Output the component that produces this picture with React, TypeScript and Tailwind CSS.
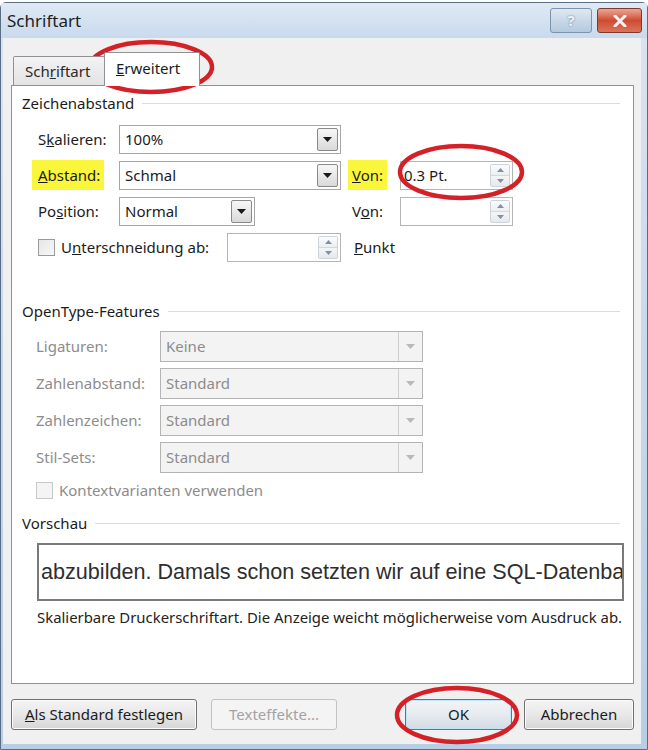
import React from "react";

const Arrow = ({ color = "#1a1a1a" }: { color?: string }) => (
  <svg width="9" height="5" viewBox="0 0 9 5">
    <path d="M0 0h9L4.5 5z" fill={color} />
  </svg>
);

function DropBtn({ disabled }: { disabled?: boolean }) {
  if (disabled) {
    return (
      <div className="w-[24px] self-stretch border-l border-[#cfcfcf] flex items-center justify-center">
        <Arrow color="#b9b9b9" />
      </div>
    );
  }
  return (
    <div className="w-[21px] my-[2px] mr-[2px] border border-[#8a8a8a] rounded-[2px] bg-gradient-to-b from-[#f7f7f7] to-[#d9d9d9] flex items-center justify-center">
      <Arrow />
    </div>
  );
}

function Spin() {
  return (
    <div className="w-[20px] my-[2px] mr-[2px] flex flex-col border border-[#cdd3da] rounded-[2px]">
      <div className="flex-1 flex items-center justify-center bg-gradient-to-b from-[#fbfbfb] to-[#eceff2] border-b border-[#d3d8de]">
        <svg width="7" height="4" viewBox="0 0 7 4">
          <path d="M0 4h7L3.5 0z" fill="#8190a8" />
        </svg>
      </div>
      <div className="flex-1 flex items-center justify-center bg-gradient-to-b from-[#f4f5f7] to-[#e6e9ec]">
        <svg width="7" height="4" viewBox="0 0 7 4">
          <path d="M0 0h7L3.5 4z" fill="#8190a8" />
        </svg>
      </div>
    </div>
  );
}

function Select({ value, w, disabled }: { value: string; w: string; disabled?: boolean }) {
  return (
    <div
      className={
        "flex self-stretch border " +
        w +
        (disabled ? " border-[#b4b4b4] bg-[#f3f3f3] text-[#8c8c8c]" : " border-[#a6a6a6] bg-white")
      }
    >
      <div className="flex-1 flex items-center pl-[5px]">{value}</div>
      <DropBtn disabled={disabled} />
    </div>
  );
}

function SpinInput({ value, w }: { value?: string; w: string }) {
  return (
    <div className={"flex self-stretch border border-[#b5b5b5] bg-white " + w}>
      <div className="flex-1 flex items-center pl-[3px]">{value}</div>
      <Spin />
    </div>
  );
}

function GroupHeader({ title }: { title: string }) {
  return (
    <div className="flex items-center h-[18px] pl-[10px] pr-[13px]">
      <span>{title}</span>
      <div className="flex-1 h-px bg-[#dcdcdc] ml-[8px]" />
    </div>
  );
}

function CheckBox({ disabled }: { disabled?: boolean }) {
  return (
    <div
      className={
        "w-[17px] h-[17px] border " +
        (disabled ? "border-[#c8c8c8] bg-[#f4f4f4]" : "border-[#9a9a9a] bg-gradient-to-br from-[#e6e6e6] to-[#f8f8f8]")
      }
    />
  );
}

function Btn({ children, w, disabled, def }: { children: React.ReactNode; w: string; disabled?: boolean; def?: boolean }) {
  return (
    <div
      className={
        "h-[31px] rounded-[3px] border flex items-center justify-center " +
        w +
        (disabled
          ? " border-[#c2c2c2] bg-[#f4f4f4] text-[#a3a3a3]"
          : def
          ? " border-[#3c7fb1] bg-gradient-to-b from-[#f2f5f7] via-[#e6ebef] to-[#d3dce3] shadow-[inset_0_0_0_1px_#bfe3f7]"
          : " border-[#707070] bg-gradient-to-b from-[#f4f4f4] via-[#e8e8e8] to-[#d6d6d6] shadow-[inset_0_0_0_1px_#fbfbfb]")
      }
    >
      {children}
    </div>
  );
}

export default function App() {
  return (
    <div className="w-[648px] h-[750px] bg-white pt-[2px] font-['Noto_Sans',sans-serif] text-[15px] leading-none text-[#1b1b1b] relative overflow-hidden">
      <div className="h-[748px] flex flex-col border border-[#5a6d82] rounded-t-[6px] bg-gradient-to-b from-[#d9e5f2] via-[#c6d8ec] to-[#b6cfe6]">
        {/* Title bar */}
        <div className="h-[35px] flex items-start pl-[6px] pr-[5px] bg-gradient-to-b from-[#dfe9f4] to-[#c8daee]">
          <span className="text-[17px] mt-[9px] text-[#1e1e1e]">Schriftart</span>
          <div className="ml-auto flex gap-[5px] mt-[5px]">
            <div className="w-[42px] h-[25px] rounded-[3px] border border-[#7d93ac] bg-gradient-to-b from-[#dfe8f2] via-[#c9d8e8] to-[#b5c9de] flex items-center justify-center">
              <span className="text-[15px] font-bold text-[#eef3f8] [text-shadow:0_0_2px_#56708e]">?</span>
            </div>
            <div className="w-[45px] h-[25px] rounded-[3px] border border-[#7c3a2e] bg-gradient-to-b from-[#e9a696] via-[#cf4a30] to-[#d8745c] flex items-center justify-center">
              <svg width="14" height="12" viewBox="0 0 14 12">
                <path d="M2 1l10 10M12 1L2 11" stroke="#f7f2f0" strokeWidth="3" strokeLinecap="round" />
              </svg>
            </div>
          </div>
        </div>
        {/* Client */}
        <div className="flex-1 ml-[2px] mr-[6px] mb-[5px] bg-[#f0f0f0] pl-[8px] pr-[7px] pt-[14px] flex flex-col">
          {/* Tabs */}
          <div className="h-[33px] flex items-end relative z-10">
            <div className="ml-[2px] w-[92px] h-[29px] border border-b-0 border-[#8e9196] rounded-t-[2px] bg-gradient-to-b from-[#f3f3f3] to-[#e3e3e3] flex items-center pl-[11px] text-[#2a2a2a]">
              Sch<u>r</u>iftart
            </div>
            <div className="-ml-[1px] w-[96px] h-[34px] -mb-[1px] border border-b-0 border-[#8e9196] rounded-t-[2px] bg-white flex items-center pl-[11px] pb-[2px]">
              <u>E</u>rweitert
            </div>
          </div>
          {/* Panel */}
          <div className="h-[599px] border border-[#8e9196] bg-white flex flex-col pt-[8px]">
            <GroupHeader title="Zeichenabstand" />
            <div className="flex flex-col gap-[7px] mt-[13px] pl-[26px]">
              <div className="h-[29px] flex items-center">
                <div className="w-[81px]">
                  S<u>k</u>alieren:
                </div>
                <Select value="100%" w="w-[222px]" />
              </div>
              <div className="h-[29px] flex items-center">
                <div className="w-[81px]">
                  <span className="-ml-[6px] pl-[6px] pr-[4px] py-[5px] bg-[#f9f63c]">
                    <u>A</u>bstand:
                  </span>
                </div>
                <Select value="Schmal" w="w-[222px]" />
                <div className="w-[48px] ml-[11px]">
                  <span className="-ml-[4px] pl-[4px] pr-[4px] py-[5px] bg-[#f9f63c]">
                    <u>V</u>on:
                  </span>
                </div>
                <SpinInput value="0.3 Pt." w="w-[113px]" />
              </div>
              <div className="h-[29px] flex items-center">
                <div className="w-[81px]">
                  Po<u>s</u>ition:
                </div>
                <div className="w-[222px] self-stretch flex">
                  <Select value="Normal" w="w-[136px]" />
                </div>
                <div className="w-[48px] ml-[11px]">
                  V<u>o</u>n:
                </div>
                <SpinInput w="w-[113px]" />
              </div>
              <div className="h-[29px] flex items-center">
                <CheckBox />
                <div className="ml-[6px] w-[166px]">
                  U<u>n</u>terschneidung ab:
                </div>
                <SpinInput w="w-[114px]" />
                <div className="ml-[13px]">
                  <u>P</u>unkt
                </div>
              </div>
            </div>

            <div className="mt-[40px]">
              <GroupHeader title="OpenType-Features" />
            </div>
            <div className="flex flex-col gap-[6px] mt-[11px] pl-[24px] text-[#8c8c8c]">
              {[
                ["Ligaturen:", "Keine"],
                ["Zahlenabstand:", "Standard"],
                ["Zahlenzeichen:", "Standard"],
                ["Stil-Sets:", "Standard"],
              ].map(([l, v]) => (
                <div key={l} className="h-[31px] flex items-center">
                  <div className="w-[124px]">{l}</div>
                  <Select value={v} w="w-[263px]" disabled />
                </div>
              ))}
              <div className="h-[18px] flex items-center mt-[2px]">
                <CheckBox disabled />
                <span className="ml-[6px]">Kontextvarianten verwenden</span>
              </div>
            </div>

            <div className="mt-[15px]">
              <GroupHeader title="Vorschau" />
            </div>
            <div className="mt-[11px] ml-[25px] w-[587px] h-[58px] border-2 border-[#7a7a7a] flex items-center overflow-hidden pl-[2px]">
              <span className="font-['Liberation_Sans',sans-serif] text-[21.6px] whitespace-nowrap text-[#2e2e2e]">
                abzubilden. Damals schon setzten wir auf eine SQL-Datenba
              </span>
            </div>
            <div className="mt-[9px] ml-[25px] text-[14.9px] text-[#222] whitespace-nowrap">
              Skalierbare Druckerschriftart. Die Anzeige weicht möglicherweise vom Ausdruck ab.
            </div>
          </div>
          {/* Buttons */}
          <div className="mt-[15px] flex items-center">
            <Btn w="w-[186px]">
              <span>
                <u>A</u>ls Standard festlegen
              </span>
            </Btn>
            <div className="ml-[14px]">
              <Btn w="w-[126px]" disabled>
                Texteffekte...
              </Btn>
            </div>
            <div className="ml-auto">
              <Btn w="w-[107px]" def>
                OK
              </Btn>
            </div>
            <div className="ml-[12px]">
              <Btn w="w-[110px]">Abbrechen</Btn>
            </div>
          </div>
        </div>
      </div>

      {/* Red annotation ellipses */}
      <svg className="absolute left-0 top-0 pointer-events-none" width="648" height="750">
        <ellipse cx="151" cy="67" rx="61" ry="25" fill="none" stroke="#d42027" strokeWidth="4.5" />
        <ellipse cx="461" cy="172" rx="61" ry="26" fill="none" stroke="#d42027" strokeWidth="4.5" />
        <ellipse cx="457" cy="715" rx="60" ry="27" fill="none" stroke="#d42027" strokeWidth="4.5" />
      </svg>
    </div>
  );
}
